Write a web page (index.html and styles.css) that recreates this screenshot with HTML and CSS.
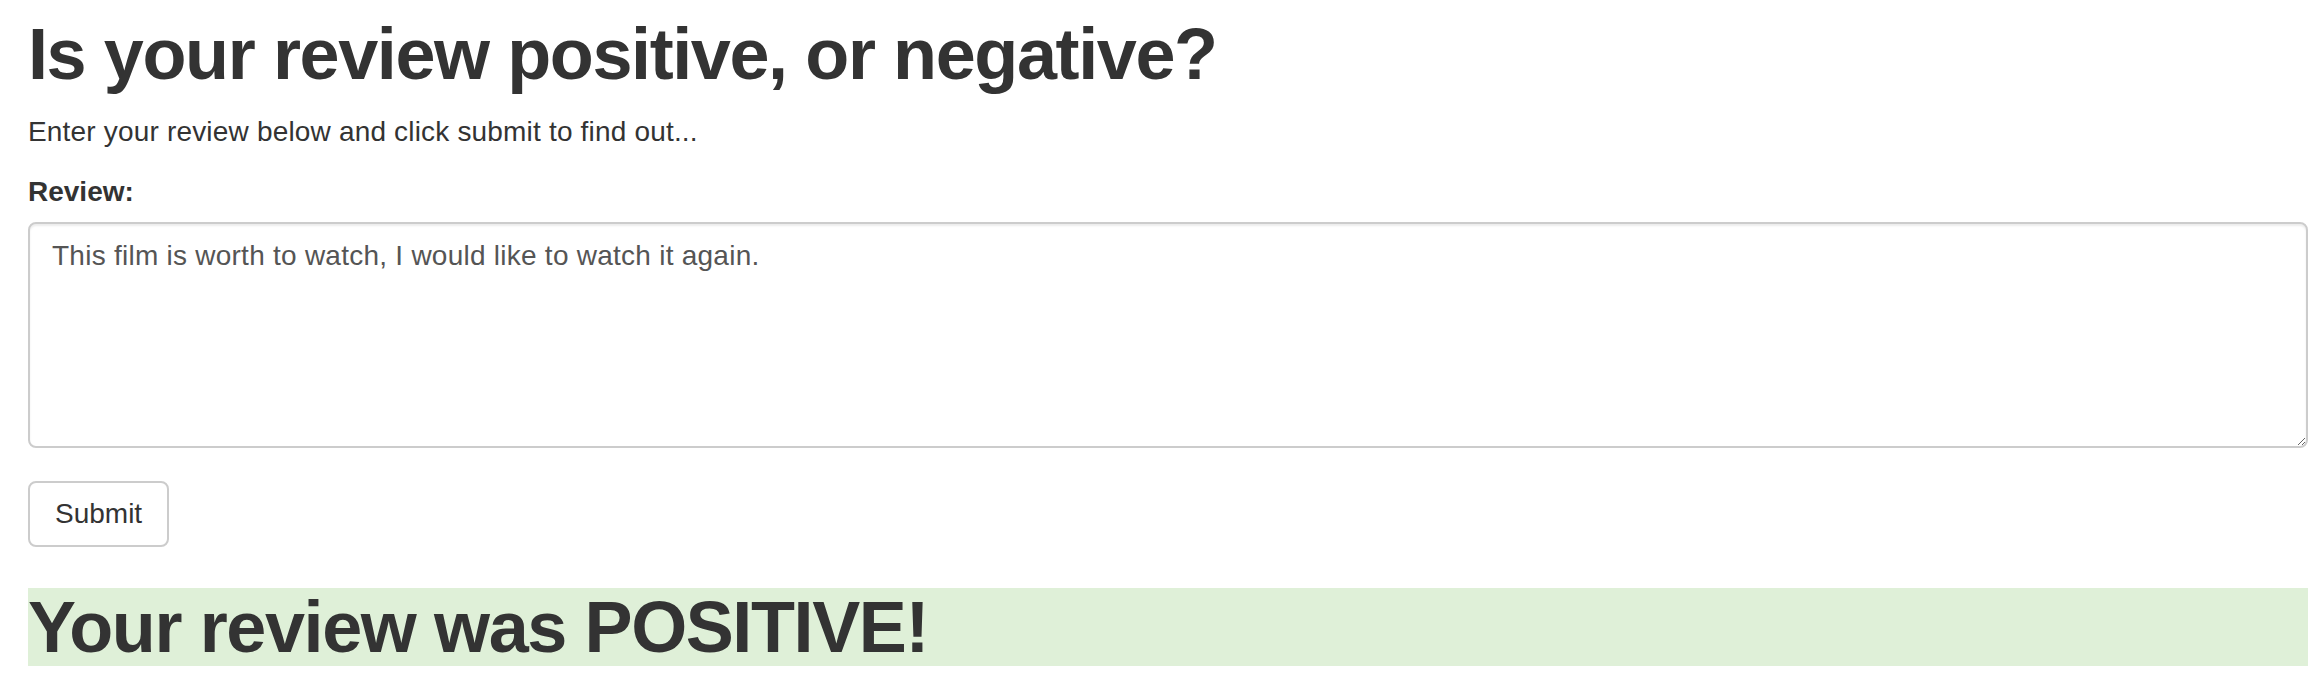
FILE: index.html
```html
<!DOCTYPE html>
<html lang="en">
<head>
<meta charset="utf-8">
<title>Review sentiment</title>
<link rel="stylesheet" href="styles.css">
</head>
<body>
<div class="container">
  <h1 class="title">Is your review positive, or negative?</h1>
  <p class="intro">Enter your review below and click submit to find out...</p>
  <form class="form">
    <div class="form-group">
      <label class="label" for="review">Review:</label>
      <textarea class="review-input" id="review" name="review">This film is worth to watch, I would like to watch it again.</textarea>
    </div>
    <button type="button" class="btn">Submit</button>
  </form>
  <h1 class="result">Your review was POSITIVE!</h1>
</div>
</body>
</html>
```

FILE: styles.css
```css
* { box-sizing: border-box; }
html, body { margin: 0; padding: 0; background: #fff; }
body {
  font-family: "Liberation Sans", Arial, Helvetica, sans-serif;
  font-size: 28px;
  line-height: 40px;
  color: #333;
}
.container {
  padding: 0 12px 0 28px;
}
.title {
  margin: 15px 0 18px;
  font-size: 72px;
  line-height: 79px;
  font-weight: 700;
  letter-spacing: -1.4px;
}
.intro {
  margin: 0 0 20px;
  letter-spacing: 0.18px;
}
.form { margin: 0; }
.form-group {
  margin-bottom: 33px;
}
.label {
  display: block;
  font-weight: 700;
  margin-bottom: 10px;
}
.review-input {
  display: block;
  width: 100%;
  height: 226px;
  padding: 12px 18px 10px 22px;
  font-family: "Liberation Sans", Arial, Helvetica, sans-serif;
  font-size: 28px;
  line-height: 40px;
  letter-spacing: 0.25px;
  color: #555;
  background: #fff;
  border: 2px solid #ccc;
  border-radius: 8px;
  box-shadow: inset 0 2px 2px rgba(0,0,0,.075);
  margin: 0;
}
.btn {
  display: block;
  margin: 0;
  padding: 11px 25px;
  font-family: "Liberation Sans", Arial, Helvetica, sans-serif;
  font-size: 28px;
  line-height: 40px;
  color: #333;
  background: #fff;
  border: 2px solid #ccc;
  border-radius: 8px;
}
.result {
  margin: 41px 0 0;
  font-size: 72px;
  line-height: 78px;
  font-weight: 700;
  letter-spacing: -1.4px;
  background: #dff0d8;
}
```
